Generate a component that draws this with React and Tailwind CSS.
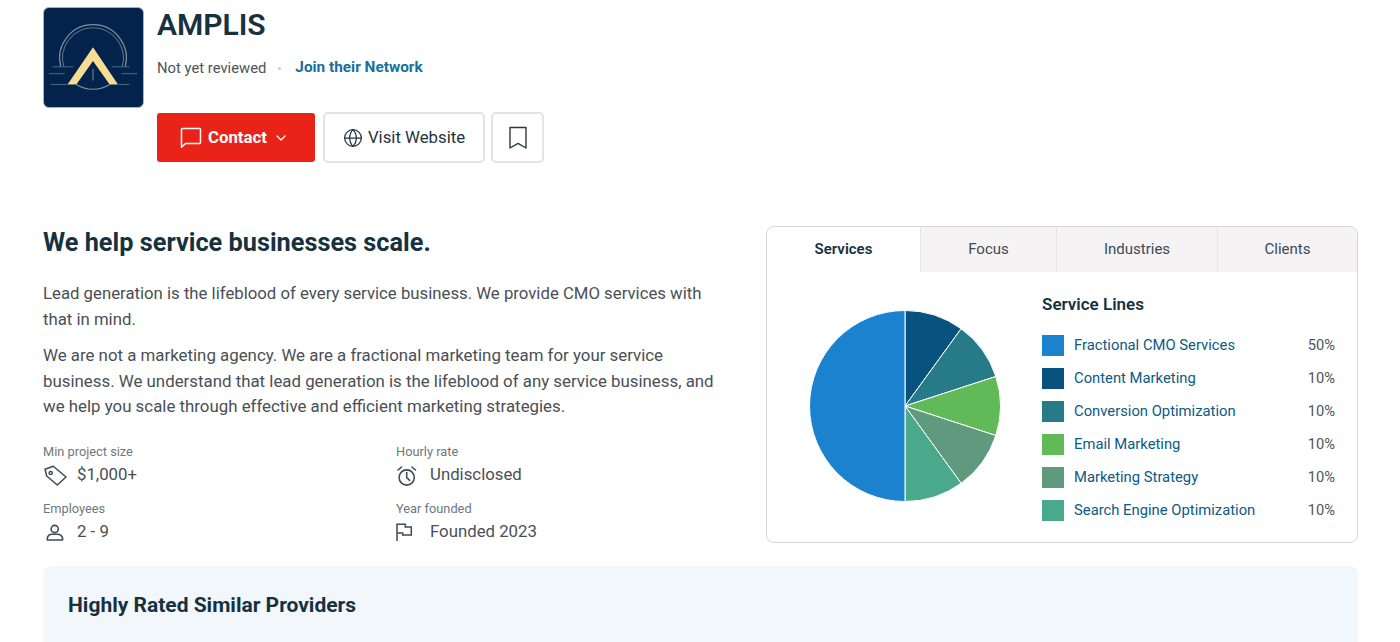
import React from 'react';
import { ChevronDown, Globe } from 'lucide-react';

const serviceLines = [
  { name: 'Fractional CMO Services', pct: 50, color: '#1b82d0' },
  { name: 'Content Marketing', pct: 10, color: '#085280' },
  { name: 'Conversion Optimization', pct: 10, color: '#277a87' },
  { name: 'Email Marketing', pct: 10, color: '#62b958' },
  { name: 'Marketing Strategy', pct: 10, color: '#5f9a7f' },
  { name: 'Search Engine Optimization', pct: 10, color: '#4aa98b' },
];

const slices = [...serviceLines.slice(1), serviceLines[0]];

const Logo = () => (
  <div className="w-[101px] h-[101px] shrink-0 rounded-md bg-[#03234d] border border-[#9fb4cc]">
    <svg viewBox="0 0 101 101" className="w-full h-full">
      <path d="M17.2 60 A34 34 0 1 1 82.8 60" fill="none" stroke="#7f8f97" strokeWidth="1.2" />
      <path d="M20.3 60 A31 31 0 1 1 79.7 60" fill="none" stroke="#5d7284" strokeWidth="1.1" />
      <path d="M33 78 A32 32 0 0 0 67 78" fill="none" stroke="#7f8f97" strokeWidth="1.2" />
      <path d="M9 60H30M69 60H87M5 67H21M79 67H95M7 78H24M76 78H87" stroke="#4f6a80" strokeWidth="1" />
      <path d="M50 40 L75.5 78 H67 L50 54 L33 78 H24 Z" fill="#f6dd93" />
      <path d="M50 62V74" stroke="#7f8f97" strokeWidth="1" />
    </svg>
  </div>
);

const PieChart = () => {
  const cx = 100;
  const cy = 100;
  const r = 95.5;
  let angle = 0;
  return (
    <svg viewBox="0 0 200 200" className="w-[200px] h-[200px] shrink-0">
      {slices.map((s) => {
        const a0 = (angle / 100) * 2 * Math.PI;
        angle += s.pct;
        const a1 = (angle / 100) * 2 * Math.PI;
        const large = s.pct > 50 ? 1 : 0;
        const x0 = cx + r * Math.sin(a0);
        const y0 = cy - r * Math.cos(a0);
        const x1 = cx + r * Math.sin(a1);
        const y1 = cy - r * Math.cos(a1);
        return (
          <path
            key={s.name}
            d={`M${cx} ${cy} L${x0} ${y0} A${r} ${r} 0 ${large} 1 ${x1} ${y1} Z`}
            fill={s.color}
            stroke="#ffffff"
            strokeWidth="1"
          />
        );
      })}
    </svg>
  );
};

const iconClass = 'w-6 h-6 overflow-visible';

const TagIcon = () => (
  <svg viewBox="0 0 24 24" className={iconClass} fill="none" stroke="#3f4a54" strokeWidth="1.5" strokeLinejoin="round">
    <path d="M2 6.3 10.3 3.3 23 14 14.3 22 3.7 13Z" />
    <circle cx="7.7" cy="10" r="1.6" />
  </svg>
);

const ClockIcon = () => (
  <svg viewBox="0 0 24 24" className={iconClass} fill="none" stroke="#3f4a54" strokeWidth="1.6" strokeLinecap="round" strokeLinejoin="round">
    <circle cx="10.7" cy="14.5" r="7.6" />
    <path d="M10.7 9.5v5.2l3 2.6M2 7 5.5 4M19.5 7 16 4" />
  </svg>
);

const PersonIcon = () => (
  <svg viewBox="0 0 24 24" className={iconClass} fill="none" stroke="#3f4a54" strokeWidth="1.6" strokeLinejoin="round">
    <circle cx="11.7" cy="9" r="3.6" />
    <path d="M4.3 20v-1.5c0-2.6 2.2-4.3 4.5-4.3h5.8c2.3 0 5 1.7 5 4.3V20z" />
  </svg>
);

const FlagIcon = () => (
  <svg viewBox="0 0 24 24" className={iconClass} fill="none" stroke="#3f4a54" strokeWidth="1.5">
    <path d="M1 21V4.3H9.3V7H15.3V15H6.7V13H1" />
  </svg>
);

const ChatIcon = () => (
  <svg viewBox="0 0 22 22" className="w-[22px] h-[22px] mr-[6px]" fill="none" stroke="#ffffff" strokeWidth="1.5" strokeLinejoin="round">
    <path d="M1.5 2.5a1 1 0 0 1 1-1h17a1 1 0 0 1 1 1v13a1 1 0 0 1-1 1H5.5l-4 3.7z" />
  </svg>
);

const BookmarkIcon = () => (
  <svg viewBox="0 0 18 23" className="w-[18px] h-[23px]" fill="none" stroke="#2a3a44" strokeWidth="1.4" strokeLinejoin="round">
    <path d="M1 1.5h16v20.5l-8-4.6L1 22z" />
  </svg>
);

const Stat = ({ label, icon, value }) => (
  <div>
    <div className="text-[12.8px] leading-[16px] text-[#6f777e]">{label}</div>
    <div className="flex items-center h-[28px] mt-[1px]">
      <div className="w-[34px] shrink-0">{icon}</div>
      <span className="text-[16.8px] text-[#4a4f55]">{value}</span>
    </div>
  </div>
);

const tabs = [
  { name: 'Services', w: 'w-[153px]', active: true },
  { name: 'Focus', w: 'w-[136px]' },
  { name: 'Industries', w: 'w-[161px]' },
  { name: 'Clients', w: 'flex-1' },
];

export default function App() {
  return (
    <div className="w-[1400px] h-[642px] overflow-hidden bg-white font-['Roboto',sans-serif] pl-[43px] pr-[42px] pt-[7px]">
      <div className="flex gap-[13px]">
        <Logo />
        <div>
          <h1 className="text-[30px] leading-[36px] font-semibold text-[#17313f]">AMPLIS</h1>
          <div className="flex items-center mt-[13px] h-[24px]">
            <span className="text-[14.8px] text-[#4f5459]">Not yet reviewed</span>
            <span className="w-[3px] h-[3px] rounded-full bg-[#c9cdd1] ml-[12px] mr-[14px]" />
            <a className="text-[15.35px] font-bold text-[#17709c]">Join their Network</a>
          </div>
          <div className="flex items-center mt-[32px]">
            <button className="w-[158px] h-[49px] pr-[3px] rounded-[3px] bg-[#e92317] text-white flex items-center justify-center font-bold text-[16.8px]">
              <ChatIcon />
              <span>Contact</span>
              <ChevronDown size={16} strokeWidth={2} className="ml-[6px]" />
            </button>
            <button className="ml-[8px] w-[162px] h-[51px] rounded-[5px] border-2 border-[#e3e3e8] bg-white flex items-center justify-center text-[16.8px] text-[#1f3340]">
              <Globe size={20} strokeWidth={1.5} className="mr-[5px]" />
              <span>Visit Website</span>
            </button>
            <button className="ml-[6px] w-[53px] h-[51px] rounded-[5px] border-2 border-[#e3e3e8] bg-white flex items-center justify-center">
              <BookmarkIcon />
            </button>
          </div>
        </div>
      </div>

      <div className="flex mt-[62px]">
        <div className="w-[723px] shrink-0">
          <h2 className="text-[25.3px] leading-[32px] font-bold text-[#17313f] mt-[2px]">We help service businesses scale.</h2>
          <p className="mt-[22px] w-[675px] text-[16.75px] leading-[25.5px] text-[#4a4f55]">
            Lead generation is the lifeblood of every service business. We provide CMO services with that in mind.
          </p>
          <p className="mt-[11px] w-[675px] text-[16.85px] leading-[25.5px] text-[#4a4f55]">
            We are not a marketing agency. We are a fractional marketing team for your service business. We understand that lead generation is the lifeblood of any service business, and we help you scale through effective and efficient marketing strategies.
          </p>
          <div className="grid grid-cols-[353px_1fr] gap-y-[12px] mt-[24px]">
            <Stat label="Min project size" icon={<TagIcon />} value="$1,000+" />
            <Stat label="Hourly rate" icon={<ClockIcon />} value="Undisclosed" />
            <Stat label="Employees" icon={<PersonIcon />} value="2 - 9" />
            <Stat label="Year founded" icon={<FlagIcon />} value="Founded 2023" />
          </div>
        </div>

        <div className="w-[592px] h-[317px] mt-[1px] rounded-[8px] border border-[#d4d6da] overflow-hidden">
          <div className="flex h-[45px]">
            {tabs.map((t) => (
              <div
                key={t.name}
                className={`${t.w} flex items-center justify-center text-[15px] ${t.active ? 'bg-white font-semibold text-[#17313f]' : 'bg-[#f6f3f5] text-[#3c4a54] border-l border-[#e6e4e7]'}`}
              >
                {t.name}
              </div>
            ))}
          </div>
          <div className="flex pl-[38px] pt-[34px]">
            <div className="w-[237px]">
              <PieChart />
            </div>
            <div className="w-[293px] -mt-[14px]">
              <h3 className="text-[17px] leading-[24px] font-semibold text-[#17313f]">Service Lines</h3>
              <ul className="mt-[18px] flex flex-col gap-[11px]">
                {serviceLines.map((s) => (
                  <li key={s.name} className="flex items-center h-[22px]">
                    <span className="w-[22px] h-[21px] shrink-0 mr-[10px]" style={{ backgroundColor: s.color }} />
                    <a className="flex-1 text-[14.8px] text-[#0c5a85]">{s.name}</a>
                    <span className="text-[14.7px] text-[#4f5459]">{s.pct}%</span>
                  </li>
                ))}
              </ul>
            </div>
          </div>
        </div>
      </div>

      <div className="mt-[20px] h-[100px] rounded-t-[8px] bg-[#f2f7fb] pl-[25px] pt-[24px]">
        <h2 className="text-[21px] leading-[30px] font-bold text-[#17313f]">Highly Rated Similar Providers</h2>
      </div>
    </div>
  );
}
